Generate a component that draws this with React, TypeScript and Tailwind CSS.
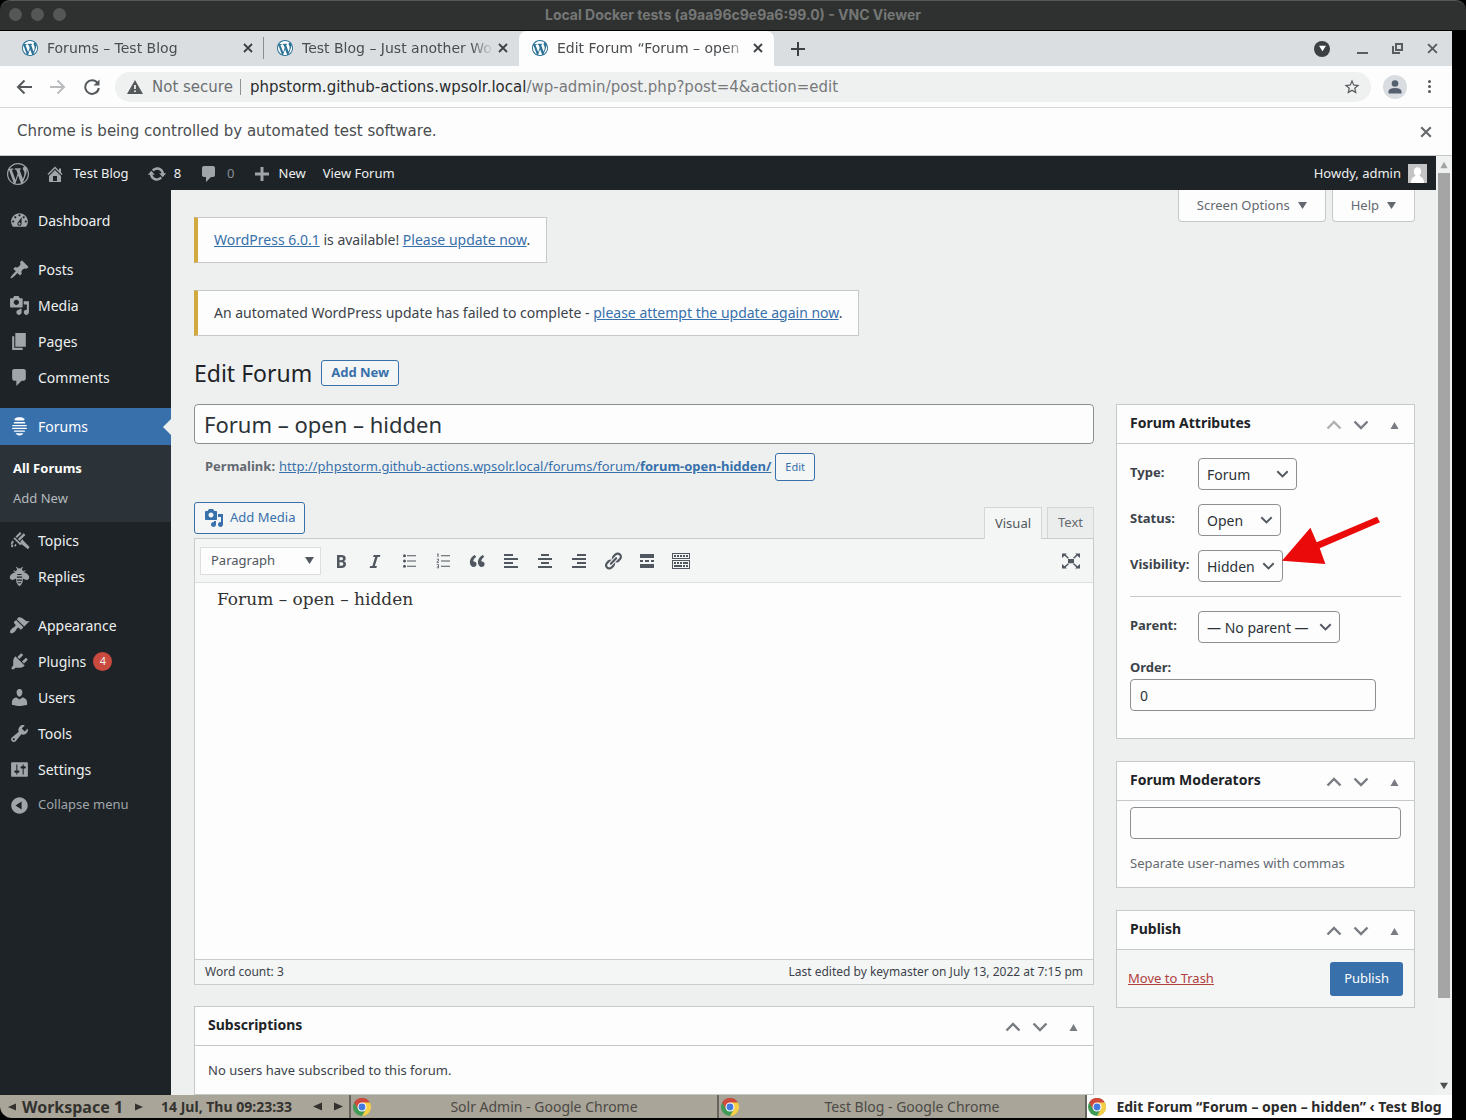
import React from 'react';

const paths = {
  wordpress:
    'M20 10c0-5.51-4.49-10-10-10C4.48 0 0 4.49 0 10c0 5.52 4.48 10 10 10 5.51 0 10-4.48 10-10zM7.78 15.37L4.37 6.22c.55-.02 1.17-.08 1.17-.08.5-.06.44-1.13-.06-1.11 0 0-1.45.11-2.37.11-.18 0-.37 0-.58-.01C4.12 2.69 6.87 1.11 10 1.11c2.33 0 4.45.87 6.05 2.34-.68-.11-1.65.39-1.65 1.58 0 .74.45 1.36.9 2.1.35.61.55 1.36.55 2.46 0 1.49-1.4 5-1.4 5l-3.03-8.37c.54-.02.82-.17.82-.17.5-.05.44-1.25-.06-1.22 0 0-1.44.12-2.38.12-.87 0-2.33-.12-2.33-.12-.5-.03-.56 1.2-.06 1.22l.92.08 1.26 3.41zM17.41 10c.24-.64.74-1.87.43-4.25.7 1.29 1.05 2.71 1.05 4.25 0 3.29-1.73 6.24-4.4 7.78.97-2.59 1.94-5.2 2.92-7.78zM6.1 18.09C3.12 16.65 1.11 13.53 1.11 10c0-1.3.23-2.48.72-3.59C3.25 10.3 4.67 14.2 6.1 18.09zm4.03-6.63l2.58 6.98c-.86.29-1.76.45-2.71.45-.79 0-1.57-.11-2.29-.33.81-2.38 1.62-4.74 2.42-7.1z',
  dashboard:
    'M3.76 16h12.48c1.1-1.37 1.76-3.11 1.76-5 0-4.42-3.58-8-8-8s-8 3.58-8 8c0 1.89.66 3.63 1.76 5zM10 4c.55 0 1 .45 1 1s-.45 1-1 1-1-.45-1-1 .45-1 1-1zM6 6c.55 0 1 .45 1 1s-.45 1-1 1-1-.45-1-1 .45-1 1-1zm8 0c.55 0 1 .45 1 1s-.45 1-1 1-1-.45-1-1 .45-1 1-1zm-5.37 5.55L12 7v6c0 1.1-.9 2-2 2s-2-.9-2-2c0-.57.24-1.08.63-1.45zM4 10c.55 0 1 .45 1 1s-.45 1-1 1-1-.45-1-1 .45-1 1-1zm12 0c.55 0 1 .45 1 1s-.45 1-1 1-1-.45-1-1 .45-1 1-1zm-5 3c0-.55-.45-1-1-1s-1 .45-1 1 .45 1 1 1 1-.45 1-1z',
  post: 'M10.44 3.02l1.82-1.82 6.36 6.35-1.83 1.82c-1.05-.68-2.48-.57-3.41.36l-.75.75c-.92.93-1.04 2.35-.35 3.41l-1.83 1.82-2.41-2.41-2.8 2.79c-.42.42-3.38 2.71-3.8 2.29s1.86-3.39 2.28-3.81l2.79-2.79L4.1 9.36l1.83-1.82c1.05.69 2.48.57 3.4-.36l.75-.75c.93-.92 1.05-2.35.36-3.41z',
  media:
    'M13 11V4c0-.55-.45-1-1-1h-1.67L9 1H5L3.67 3H2c-.55 0-1 .45-1 1v7c0 .55.45 1 1 1h10c.55 0 1-.45 1-1zM7 4.5c1.38 0 2.5 1.12 2.5 2.5S8.38 9.5 7 9.5 4.5 8.38 4.5 7 5.62 4.5 7 4.5zM14 6h5v10.5c0 1.38-1.12 2.5-2.5 2.5S14 17.88 14 16.5s1.12-2.5 2.5-2.5c.17 0 .34.02.5.05V9h-3V6zm-4 8.05V13h2v3.5c0 1.38-1.12 2.5-2.5 2.5S7 17.88 7 16.5 8.12 14 9.5 14c.17 0 .34.02.5.05z',
  page: 'M6 15V2h10v13H6zm-1 1h8v2H3V5h2v11z',
  comment: 'M5 2h9c1.1 0 2 .9 2 2v7c0 1.1-.9 2-2 2h-2l-5 5v-5H5c-1.1 0-2-.9-2-2V4c0-1.1.9-2 2-2z',
  hive: 'M8.500 1.200h3q1.500 0 2 1h.3q1 0 1 1t-1 1H6.200q-1 0-1-1t1-1h.3q.5-1 2-1zM5.500 5.600h9q1 0 1 .8t-1 .8h-9q-1 0-1-.8t1-.8zM3.800 8.600h12.400q.8 0 .8.600t-.8.600H3.800q-.8 0-.8-.6t.8-.6zM3.800 11.200h12.400q.8 0 .8.600t-.8.600H3.800q-.8 0-.8-.6t.8-.6zM5.500 13.800h9q1 0 1 .6t-1 .6h-9q-1 0-1-.6t1-.6zM7.200 16.400h5.600q.8 0 .8.600t-1.200.6q-.6 1-2.400 1t-2.400-1q-1.200 0-1.200-.6t.8-.6z',
  topics:
    'M6.200 6.300L10.500 2l1.400 1.400-4.300 4.300zM8.500 8.600L14 3.100l1.600 1.600-5.500 5.500zM4.200 8.100l1.200-1.200 6.500 6.500-1.200 1.200zM10.800 10.900l2-2 1.200 1.500 5.600 5.900-1.500 2-7-5.400zM3 9.800l1.700 1.700-2.200 2.700-.900-.800zM2 15.200c0-.800 1-2 1-2s1 1.200 1 2-.400 1.300-1 1.300-1-.500-1-1.300zM6 13l1.300 1.300L5.900 16l-1-.800z',
  bee: 'M7.500.800l1.200 1.600q1.300-.600 2.600 0L12.500.800l.800.600-1.100 1.600q.900.800 1 2l2.300-.900.300.800-2.200 1.100c2.500.200 5 2 5.600 4.200.500 2-1.200 3.200-3.200 3-1.100-.100-2-.600-2.700-1.200.200 3.200-.900 5.600-3.300 7.200-2.400-1.600-3.500-4-3.300-7.200-.700.600-1.600 1.100-2.700 1.200-2 .200-3.700-1-3.200-3C1.400 8 3.900 6.200 6.400 6L4.200 4.900l.300-.800 2.300.900q.100-1.200 1-2L6.700 1.400zM8 7.500v1.100h4V7.500zM7.500 10v1.200h5V10zM7.500 12.800V14h5v-1.200zM8.200 15.500l.400 1h2.800l.400-1z',
  appearance:
    'M14.48 11.06L7.41 3.99l1.5-1.5c.5-.56 2.3-.47 3.51.32 1.21.8 1.43 1.28 2.91 2.1 1.18.64 2.45 1.26 4.45.85zm-.71.71L6.7 4.7 4.93 6.47c-.39.39-.39 1.02 0 1.41l1.06 1.06c.39.39.39 1.03 0 1.42-.6.6-1.43 1.11-2.21 1.69-.35.26-.7.53-1.01.84C1.43 14.23.4 16.08 1.4 17.07c.99 1 2.84-.03 4.18-1.36.31-.31.58-.66.85-1.02.57-.78 1.08-1.61 1.69-2.21.39-.39 1.02-.39 1.41 0l1.06 1.06c.39.39 1.02.39 1.41 0z',
  plugins:
    'M13.11 4.36L9.87 7.6 8 5.73l3.24-3.24c.35-.34 1.05-.2 1.56.32.52.51.66 1.21.31 1.55zm-8 1.77l.91-1.12 9.01 9.01-1.19.84c-.71.71-2.63 1.16-3.82 1.16H6.14L4.9 17.26c-.59.59-1.54.59-2.12 0-.59-.58-.59-1.53 0-2.12l1.24-1.24v-3.88c0-1.13.4-3.19 1.09-3.89zm7.26 3.97l3.24-3.24c.34-.35 1.04-.21 1.55.31.52.51.66 1.21.31 1.55l-3.24 3.25z',
  users:
    'M10 9.25c-2.27 0-2.73-3.44-2.73-3.44C7 4.02 7.82 2 9.97 2c2.16 0 2.98 2.02 2.71 3.81 0 0-.41 3.44-2.68 3.44zm0 2.57L12.72 10c2.39 0 4.52 2.33 4.52 4.53v2.49s-3.65 1.13-7.24 1.13c-3.65 0-7.24-1.13-7.24-1.13v-2.49c0-2.25 1.94-4.48 4.47-4.48z',
  tools:
    'M16.68 9.77c-1.34 1.34-3.3 1.67-4.95.99l-5.41 6.52c-.99.99-2.59.99-3.58 0s-.99-2.59 0-3.57l6.52-5.42c-.68-1.65-.35-3.61.99-4.95 1.28-1.28 3.12-1.62 4.72-1.06l-2.89 2.89 2.82 2.82 2.86-2.87c.53 1.58.18 3.39-1.08 4.65zM3.81 16.21c.4.39 1.04.39 1.43 0 .4-.4.4-1.04 0-1.43-.39-.4-1.03-.4-1.43 0-.39.39-.39 1.03 0 1.43z',
  settings:
    'M18 16V4c0-.55-.45-1-1-1H3c-.55 0-1 .45-1 1v12c0 .55.45 1 1 1h14c.55 0 1-.45 1-1zM8 11h1c.55 0 1 .45 1 1s-.45 1-1 1H8v1.500c0 .28-.22.5-.5.5s-.5-.22-.5-.5V13H6c-.55 0-1-.45-1-1s.45-1 1-1h1V5.500c0-.28.22-.5.5-.5s.5.22.5.5V11zm5-2h-1c-.55 0-1-.45-1-1s.45-1 1-1h1V5.500c0-.28.22-.5.5-.5s.5.22.5.5V7h1c.55 0 1 .45 1 1s-.45 1-1 1h-1v5.500c0 .28-.22.5-.5.5s-.5-.22-.5-.5V9z',
  collapse:
    'M10 2.16c4.33 0 7.84 3.51 7.84 7.84s-3.51 7.84-7.84 7.84S2.16 14.33 2.16 10 5.71 2.16 10 2.16zm2 11.72V6.12L6.18 9.97z',
  home: 'M16 8.5l1.53 1.53-1.06 1.06L10 4.6l-6.47 6.49-1.06-1.06L10 2.5l4 4v-2h2v4zm-6-2.46l6 5.99V18H4v-5.97zM12 17v-5H8v5h4z',
  update:
    'M10.2 3.28c3.53 0 6.43 2.61 6.92 6h2.08l-3.5 4-3.5-4h2.32c-.45-1.97-2.21-3.45-4.32-3.45-1.45 0-2.73.71-3.54 1.78L4.95 5.66C6.23 4.2 8.11 3.28 10.2 3.28zm-.4 13.44c-3.52 0-6.43-2.61-6.92-6H.8l3.5-4c1.17 1.33 2.33 2.67 3.5 4H5.48c.45 1.97 2.21 3.45 4.32 3.45 1.45 0 2.73-.71 3.54-1.78l1.71 1.95c-1.28 1.46-3.15 2.38-5.25 2.38z',
  plus: 'M17 8.500v3h-5.500V17h-3v-5.500H3v-3h5.500V3h3v5.500z',
  bold: 'M6 4v13h4.540c1.370 0 2.460-.33 3.260-1 .8-.66 1.200-1.580 1.200-2.770 0-.84-.17-1.510-.51-2.010s-.9-.85-1.670-1.030v-.09c.57-.1 1.020-.4 1.360-.9s.51-1.130.51-1.910c0-1.140-.39-1.980-1.170-2.500C12.750 4.260 11.500 4 9.780 4H6zm2.570 5.150V6.260h1.360c.73 0 1.270.11 1.610.32.34.22.51.58.51 1.070 0 .54-.16.92-.47 1.150s-.82.35-1.510.35h-1.500zm0 2.190h1.600c1.440 0 2.160.53 2.160 1.610 0 .6-.17 1.050-.51 1.340s-.86.43-1.570.43H8.570v-3.380z',
  italic: 'M14.78 6h-2.130l-2.800 9h2.120l-.62 2H4.600l.62-2h2.140l2.800-9H8.030l.62-2h6.750z',
  quote:
    'M9.49 13.22c0-.74-.2-1.38-.61-1.9-.62-.78-1.83-.88-2.53-.72-.29-1.65 1.11-3.75 2.92-4.65L7.88 4c-2.73 1.3-5.42 4.28-4.96 8.05C3.21 14.43 4.59 16 6.54 16c.85 0 1.56-.25 2.12-.75s.83-1.18.83-2.03zm8.05 0c0-.74-.2-1.38-.61-1.9-.63-.78-1.83-.88-2.53-.72-.29-1.65 1.11-3.75 2.92-4.65L15.93 4c-2.73 1.3-5.41 4.28-4.95 8.05.29 2.38 1.66 3.95 3.61 3.95.85 0 1.56-.25 2.12-.75s.83-1.18.83-2.03z',
  bullets:
    'M5.500 3.200a1.500 1.500 0 110 3 1.500 1.500 0 010-3zM8 4.200h9v1H8zM5.500 8.500a1.500 1.500 0 110 3 1.500 1.500 0 010-3zM8 9.500h9v1H8zM5.500 13.800a1.500 1.500 0 110 3 1.500 1.500 0 010-3zM8 14.800h9v1H8z',
  numbers:
    'M4.500 2.500h1V6h-1V3.500H4v-.600zM8 4.200h9v1H8zM3.700 7.800h2.100v1.900L4.700 11h1.200v.700H3.600V11l1.400-1.600v-.900H3.700zM8 9.500h9v1H8zM3.700 13.300h2.200v3.900H3.700v-.700h1.400v-.900H4V15h1.100v-1H3.700zM8 14.800h9v1H8z',
  left: 'M12 5V3H3v2h9zm5 4V7H3v2h14zm-5 4v-2H3v2h9zm5 4v-2H3v2h14z',
  center: 'M14 5V3H6v2h8zm3 4V7H3v2h14zm-3 4v-2H6v2h8zm3 4v-2H3v2h14z',
  right: 'M17 5V3H8v2h9zm0 4V7H3v2h14zm0 4v-2H8v2h9zm0 4v-2H3v2h14z',
  link: 'M17.74 2.76c1.68 1.69 1.68 4.41 0 6.1l-1.53 1.52c-1.12 1.12-2.7 1.47-4.14 1.09l2.62-2.61.76-.77.76-.76c.84-.84.84-2.2 0-3.04-.84-.85-2.2-.85-3.04 0l-.77.76-3.38 3.38c-.37-1.44-.02-3.02 1.1-4.14l1.52-1.53c1.69-1.68 4.42-1.68 6.1 0zM8.59 13.43l5.34-5.34c.42-.42.42-1.1 0-1.52-.44-.43-1.13-.39-1.53 0l-5.33 5.34c-.42.42-.42 1.1 0 1.52.44.43 1.13.39 1.52 0zm-.76 2.29l4.14-4.15c.38 1.44.03 3.02-1.09 4.14l-1.52 1.53c-1.69 1.68-4.41 1.68-6.1 0-1.68-1.68-1.68-4.42 0-6.1l1.53-1.52c1.12-1.12 2.7-1.47 4.14-1.1l-4.14 4.15c-.85.84-.85 2.2 0 3.05.84.84 2.2.84 3.04 0z',
  more: 'M17 7V3H3v4h14zM6 11V9H3v2h3zm6 0V9H8v2h4zm5 0V9h-3v2h3zm0 6v-4H3v4h14z',
  sink: 'M19 2v6H1V2h18zm-1 5V3H2v4h16zM5 4v2H3V4h2zm3 0v2H6V4h2zm3 0v2H9V4h2zm3 0v2h-2V4h2zm3 0v2h-2V4h2zm2 5v9H1V9h18zm-1 8v-7H2v7h16zM5 11v2H3v-2h2zm3 0v2H6v-2h2zm3 0v2H9v-2h2zm6 0v2h-5v-2h5zm-6 3v2H3v-2h8zm3 0v2h-2v-2h2zm3 0v2h-2v-2h2z',
  expand:
    'M7 8h6v4.200H7zM1 2.500h4.800L4.700 3.800l3.200 3-1 1-3.300-3L1 7zM19 2.500h-4.800l1.100 1.300-3.200 3 1 1 3.300-3L19 7zM1 17.500h4.800l-1.100-1.300 3.200-3-1-1-3.300 3L1 13zM19 17.500h-4.800l1.100-1.300-3.200-3 1-1 3.300 3L19 13z',
};

type IconName = keyof typeof paths;

const Icon = ({ name, className = 'size-5' }: { name: IconName; className?: string }) => (
  <svg viewBox="0 0 20 20" fill="currentColor" fillRule="evenodd" className={`shrink-0 ${className}`} aria-hidden="true">
    <path d={paths[name]} />
  </svg>
);

const Cross = ({ className }: { className: string }) => (
  <svg viewBox="0 0 10 10" className={className} fill="none" stroke="currentColor" strokeWidth="1.800" aria-hidden="true">
    <path d="M1 1l8 8M9 1l-8 8" />
  </svg>
);

const Triangle = ({ dir, className = 'size-[9px]' }: { dir: 'up' | 'down' | 'left' | 'right'; className?: string }) => {
  const shapes = { up: 'M5 1l4.500 8h-9z', down: 'M0 1h10L5 9z', left: 'M0 5l10-4.500v9z', right: 'M10 5L0 .500v9z' };
  return (
    <svg viewBox="0 0 10 10" className={`shrink-0 ${className}`} fill="currentColor" aria-hidden="true">
      <path d={shapes[dir]} />
    </svg>
  );
};

const Chevron = ({ up, className }: { up?: boolean; className: string }) => (
  <svg viewBox="0 0 16 10" className={className} fill="none" stroke="currentColor" strokeWidth="2.400" aria-hidden="true">
    <path d={up ? 'M1.500 8.500L8 2l6.500 6.500' : 'M1.500 1.500L8 8l6.500-6.500'} />
  </svg>
);

const Favicon = () => (
  <svg viewBox="0 0 20 20" className="size-4 shrink-0" aria-hidden="true">
    <circle cx="10" cy="10" r="10" fill="#a9cfe2" />
    <circle cx="10" cy="10" r="9" fill="#fff" />
    <path d={paths.wordpress} fill="#2c7196" fillRule="evenodd" />
  </svg>
);

const ChromeLogo = () => (
  <svg viewBox="0 0 20 20" className="size-[18px] shrink-0" aria-hidden="true">
    <circle cx="10" cy="10" r="10" fill="#3f9a55" />
    <path d="M10 10L1.300 5A10 10 0 0118.700 5z" fill="#cf4a3c" />
    <path d="M10 5h8.700A10 10 0 0110 20l4.300-7.500z" fill="#f5ce4a" />
    <path d="M1.300 5L5.700 12.500 10 5z" fill="#cf4a3c" />
    <circle cx="10" cy="10" r="5" fill="#fff" />
    <circle cx="10" cy="10" r="3.800" fill="#4479e0" />
  </svg>
);

const browserTabs = [
  { title: 'Forums – Test Blog', active: false },
  { title: 'Test Blog – Just another Wo', active: false },
  { title: 'Edit Forum “Forum – open', active: true },
];

const BrowserChrome = () => (
  <header className="shrink-0 bg-[#fdfdfd] font-['DejaVu_Sans',sans-serif]">
    <div className="flex h-[35px] items-center bg-[#dbdee1] pl-[9px]">
      {browserTabs.map((tab, i) => (
        <div
          key={tab.title}
          className={`flex h-full w-[255px] items-center pb-px pl-[13px] pr-[11px] ${tab.active ? 'rounded-t-lg bg-[#fdfdfd]' : ''}`}
        >
          <Favicon />
          <span className="ml-[9px] flex-1 overflow-hidden whitespace-nowrap text-[14px] text-[#4a4d50] [mask-image:linear-gradient(to_right,#000_88%,transparent)]">
            {tab.title}
          </span>
          <button aria-label="Close tab" className="ml-1 text-[#3c4043]">
            <Cross className="size-[10px]" />
          </button>
          {i === 0 && <span className="-mr-[11px] ml-[10px] h-[22px] w-px bg-[#8a8d90]" />}
        </div>
      ))}
      <button aria-label="New tab" className="ml-[17px] text-[#3c4043]">
        <svg viewBox="0 0 14 14" className="size-[14px]" stroke="currentColor" strokeWidth="2" aria-hidden="true">
          <path d="M7 0v14M0 7h14" />
        </svg>
      </button>
      <div className="ml-auto flex items-center pr-[14px] text-[#5a5d60]">
        <button aria-label="Search tabs" className="flex size-4 items-center justify-center rounded-full bg-[#3c4043] text-white">
          <Triangle dir="down" className="size-[7px]" />
        </button>
        <button aria-label="Minimize" className="ml-[27px] mt-2 h-[2px] w-[11px] bg-[#5a5d60]" />
        <button aria-label="Restore" className="ml-6">
          <svg viewBox="0 0 11 11" className="size-[11px]" fill="none" stroke="currentColor" strokeWidth="2" aria-hidden="true">
            <path d="M4 1h6v6H4zM1 3v7h7" />
          </svg>
        </button>
        <button aria-label="Close window" className="ml-6">
          <Cross className="size-[11px]" />
        </button>
      </div>
    </div>

    <div className="flex h-[42px] items-center border-b border-[#d4d7d8] px-4 text-[#55595c]">
      <button aria-label="Back">
        <svg viewBox="0 0 16 16" className="size-4" fill="none" stroke="currentColor" strokeWidth="2" aria-hidden="true">
          <path d="M16 8H2M8.500 1.500L2 8l6.500 6.500" />
        </svg>
      </button>
      <button aria-label="Forward" className="ml-[18px] text-[#b9bcbd]">
        <svg viewBox="0 0 16 16" className="size-4" fill="none" stroke="currentColor" strokeWidth="2" aria-hidden="true">
          <path d="M0 8h14M7.500 1.500L14 8l-6.500 6.500" />
        </svg>
      </button>
      <button aria-label="Reload" className="ml-[18px]">
        <svg viewBox="0 0 16 16" className="size-4" fill="none" stroke="currentColor" strokeWidth="2" aria-hidden="true">
          <path d="M13.500 4A6.800 6.800 0 1014.800 9" />
          <path d="M15.500.500v6h-6z" fill="currentColor" stroke="none" />
        </svg>
      </button>
      <div className="ml-[15px] flex h-[30px] flex-1 items-center rounded-full bg-[#eff1f1] pl-3 pr-[10px] pt-px text-[15px]">
        <svg viewBox="0 0 16 14" className="h-[14px] w-4" fill="currentColor" aria-hidden="true">
          <path d="M8 0l8 14H0z" />
          <path d="M7.200 5h1.600v4H7.200zM7.200 10.500h1.600V12H7.200z" fill="#fff" />
        </svg>
        <span className="ml-[9px] text-[#6c6f71]">Not secure</span>
        <span className="ml-[7px] mr-[9px] h-4 w-px bg-[#8f9294]" />
        <span className="text-[#77797b]">
          <span className="text-[#2a2c2e]">phpstorm.github-actions.wpsolr.local</span>/wp-admin/post.php?post=4&amp;action=edit
        </span>
        <svg viewBox="0 0 24 24" className="ml-auto size-[18px]" fill="currentColor" aria-hidden="true">
          <path d="M22 9.240l-7.190-.620L12 2 9.190 8.630 2 9.240l5.460 4.730L5.820 21 12 17.270 18.180 21l-1.630-7.030L22 9.240zM12 15.400l-3.760 2.270 1-4.280-3.320-2.880 4.380-.380L12 6.100l1.710 4.040 4.380.380-3.320 2.880 1 4.280L12 15.400z" />
        </svg>
      </div>
      <button aria-label="Profile" className="ml-3 flex size-6 items-center justify-center rounded-full bg-[#d9dce0]">
        <svg viewBox="0 0 14 14" className="size-[14px]" fill="#55606f" aria-hidden="true">
          <circle cx="7" cy="3.500" r="3.300" />
          <path d="M.500 13.500v-2Q.500 8 7 8t6.500 3.500v2z" />
        </svg>
      </button>
      <button aria-label="Menu" className="ml-[21px] mr-[5px] flex flex-col gap-[2px]">
        <i className="size-[3px] rounded-full bg-[#55595c]" />
        <i className="size-[3px] rounded-full bg-[#55595c]" />
        <i className="size-[3px] rounded-full bg-[#55595c]" />
      </button>
    </div>

    <div className="flex h-12 items-center justify-between border-b border-[#c3c6c6] pl-[17px] pr-5 text-[15px] text-[#4a4d50]">
      <p>Chrome is being controlled by automated test software.</p>
      <button aria-label="Dismiss" className="text-[#66696b]">
        <Cross className="size-[12px]" />
      </button>
    </div>
  </header>
);

const AdminBar = () => (
  <nav className="flex h-[34px] shrink-0 items-center bg-[#1d2327] pl-[7px] pr-[9px] pt-px text-[13px] text-[#eef0f0]">
    <a href="#wp" aria-label="WordPress" className="text-[#a0a5aa]">
      <Icon name="wordpress" className="size-[22px]" />
    </a>
    <a href="#site" className="ml-4 flex items-center gap-2">
      <Icon name="home" className="size-5 text-[#a0a5aa]" />
      Test Blog
    </a>
    <a href="#updates" className="ml-[18px] flex items-center gap-[7px]">
      <Icon name="update" className="size-5 text-[#a0a5aa]" />8
    </a>
    <a href="#comments" className="ml-[18px] flex items-center gap-2 text-[#8a8f93]">
      <Icon name="comment" className="size-5 text-[#a0a5aa]" />0
    </a>
    <a href="#new" className="ml-[17px] flex items-center gap-[7px]">
      <Icon name="plus" className="size-5 text-[#a0a5aa]" />
      New
    </a>
    <a href="#view" className="ml-[17px]">
      View Forum
    </a>
    <a href="#profile" className="ml-auto flex items-center gap-[7px]">
      Howdy, admin
      <svg viewBox="0 0 20 20" className="size-[19px]" aria-hidden="true">
        <path fill="#c4c4c4" d="M0 0h20v20H0z" />
        <path fill="#fff" d="M10 3.500c5 0 4.500 7 2 8.500 1 1.500 4.500 1.500 5 8H3c.5-6.500 4-6.500 5-8-2.500-1.500-3-8.500 2-8.500z" />
      </svg>
    </a>
  </nav>
);

const MenuItem = ({ icon, label, badge }: { icon: IconName; label: string; badge?: number }) => (
  <a href="#menu" className="flex h-9 items-center pl-[9px] text-[#eef0f0]">
    <Icon name={icon} className="size-[21px] text-[#a0a5aa]" />
    <span className="ml-2">{label}</span>
    {badge && (
      <span className="ml-[7px] flex size-[19px] items-center justify-center rounded-full bg-[#ca4a40] text-[11px]">{badge}</span>
    )}
  </a>
);

const Sidebar = () => (
  <aside className="flex w-[171px] shrink-0 flex-col gap-[13px] bg-[#1d2327] pt-3 text-[14px]">
    <MenuItem icon="dashboard" label="Dashboard" />
    <div>
      <MenuItem icon="post" label="Posts" />
      <MenuItem icon="media" label="Media" />
      <MenuItem icon="page" label="Pages" />
      <MenuItem icon="comment" label="Comments" />
    </div>
    <div>
      <a href="#forums" className="flex h-[37px] items-center bg-[#3870ab] pl-[9px] text-white">
        <Icon name="hive" className="size-[21px]" />
        <span className="ml-2">Forums</span>
        <svg viewBox="0 0 8 16" className="ml-auto h-4 w-2" fill="#eef0f0" aria-hidden="true">
          <path d="M8 0v16L0 8z" />
        </svg>
      </a>
      <div className="flex h-[77px] flex-col justify-center gap-[10px] bg-[#2c3338] pb-[2px] pl-[13px] text-[13px] leading-5">
        <a href="#all" className="font-bold text-white">
          All Forums
        </a>
        <a href="#add" className="text-[#b4b9bd]">
          Add New
        </a>
      </div>
      <MenuItem icon="topics" label="Topics" />
      <MenuItem icon="bee" label="Replies" />
    </div>
    <div>
      <MenuItem icon="appearance" label="Appearance" />
      <MenuItem icon="plugins" label="Plugins" badge={4} />
      <MenuItem icon="users" label="Users" />
      <MenuItem icon="tools" label="Tools" />
      <MenuItem icon="settings" label="Settings" />
      <button className="flex h-9 items-center pl-[9px] text-[13px] text-[#a0a5aa]">
        <Icon name="collapse" className="size-[21px]" />
        <span className="ml-2">Collapse menu</span>
      </button>
    </div>
  </aside>
);

const Notice = ({ children }: { children: React.ReactNode }) => (
  <div className="flex h-[46px] w-fit items-center border border-l-4 border-[#c6c9ca] border-l-[#d2a93f] bg-[#fdfdfd] px-4 pb-[2px] text-[14px]">
    <p>{children}</p>
  </div>
);

const Link = ({ children, className = '' }: { children: React.ReactNode; className?: string }) => (
  <a href="#link" className={`text-[#3870ab] underline ${className}`}>
    {children}
  </a>
);

const PanelHeader = ({ title, first }: { title: string; first?: boolean }) => (
  <div className="flex h-[39px] items-center border-b border-[#c6c9ca] pl-[13px] pr-[15px]">
    <h2 className="pb-1 text-[14px] font-bold text-[#1d2327]">{title}</h2>
    <div className="ml-auto mt-[2px] flex items-center text-[#787c82]">
      <button aria-label="Move up" className={first ? 'text-[#b0b3b6]' : ''}>
        <Chevron up className="h-[10px] w-4" />
      </button>
      <button aria-label="Move down" className="ml-[11px]">
        <Chevron className="h-[10px] w-4" />
      </button>
      <button aria-label={`Toggle ${title}`} className="ml-[21px]">
        <Triangle dir="up" />
      </button>
    </div>
  </div>
);

const Panel = ({ title, first, children }: { title: string; first?: boolean; children: React.ReactNode }) => (
  <section className="border border-[#c6c9ca] bg-[#fdfdfd]">
    <PanelHeader title={title} first={first} />
    {children}
  </section>
);

const SelectRow = ({
  id,
  label,
  value,
  width,
  children,
}: {
  id: string;
  label: string;
  value: string;
  width: string;
  children?: React.ReactNode;
}) => (
  <div className="flex items-center">
    <label htmlFor={id} className="w-[68px] shrink-0 whitespace-nowrap pb-[2px] text-[13px] font-bold text-[#3c434a]">
      {label}
    </label>
    <div className={`relative ${width}`}>
      <select id={id} className="h-8 w-full appearance-none rounded border border-[#8c8f94] bg-[#fdfdfd] pl-2 text-[14px] text-[#2c3338]">
        <option>{value}</option>
      </select>
      <Chevron className="pointer-events-none absolute right-2 top-3 h-2 w-[13px] text-[#50575e]" />
      {children}
    </div>
  </div>
);

const toolbar: { name: IconName; label: string }[] = [
  { name: 'bold', label: 'Bold' },
  { name: 'italic', label: 'Italic' },
  { name: 'bullets', label: 'Bulleted list' },
  { name: 'numbers', label: 'Numbered list' },
  { name: 'quote', label: 'Blockquote' },
  { name: 'left', label: 'Align left' },
  { name: 'center', label: 'Align center' },
  { name: 'right', label: 'Align right' },
  { name: 'link', label: 'Insert link' },
  { name: 'more', label: 'Read more' },
  { name: 'sink', label: 'Toolbar toggle' },
];

const Editor = () => (
  <div>
    <div className="flex items-end">
      <button className="mb-1 flex h-8 items-center gap-[6px] rounded-[3px] border border-[#3870ab] bg-[#f4f6f6] px-[9px] text-[13px] text-[#3870ab]">
        <Icon name="media" />
        Add Media
      </button>
      <div className="ml-auto flex gap-[5px] text-[13px] text-[#50575e]">
        <button className="relative -mb-px h-8 border border-b-0 border-[#d3d5d6] bg-[#f4f6f6] px-[10px]">Visual</button>
        <button className="h-[31px] border border-b-0 border-[#d3d5d6] bg-[#ebeded] px-[10px] text-[#646970]">Text</button>
      </div>
    </div>
    <div className="border border-[#c9cccd] bg-[#fdfdfd]">
      <div className="flex h-11 items-center border-b border-[#dcdedf] bg-[#f4f6f6] pl-[5px] pr-3 text-[#50575e]">
        <button className="flex h-7 w-[121px] items-center justify-between border border-[#dcdedf] bg-[#fdfdfd] pl-[10px] pr-[6px] text-[13px]">
          Paragraph
          <Triangle dir="down" />
        </button>
        <div className="ml-[10px] flex gap-[14px]">
          {toolbar.map((item) => (
            <button key={item.name} aria-label={item.label}>
              <Icon name={item.name} />
            </button>
          ))}
        </div>
        <button aria-label="Fullscreen" className="ml-auto">
          <Icon name="expand" />
        </button>
      </div>
      <div className="h-[376px] px-[22px] pt-1 font-['DejaVu_Serif',serif] text-[17px] text-[#333]">Forum – open – hidden</div>
      <div className="flex h-[25px] items-center justify-between border-t border-[#c9cccd] bg-[#f4f6f6] px-[10px] text-[12px]">
        <span>Word count: 3</span>
        <span>Last edited by keymaster on July 13, 2022 at 7:15 pm</span>
      </div>
    </div>
  </div>
);

const SideColumn = () => (
  <div className="flex w-[299px] shrink-0 flex-col gap-[22px]">
    <Panel title="Forum Attributes" first>
      <div className="h-[294px] px-[13px] pt-[14px]">
        <div className="flex flex-col gap-[14px]">
          <SelectRow id="type" label="Type:" value="Forum" width="w-[99px]" />
          <SelectRow id="status" label="Status:" value="Open" width="w-[83px]" />
          <SelectRow id="visibility" label="Visibility:" value="Hidden" width="w-[85px]">
            {/* Callout arrow pointing at the visibility select */}
            <svg viewBox="0 0 98 48" className="pointer-events-none absolute -top-[34px] left-[84px] h-12 w-[98px]" fill="#eb0a0a" aria-hidden="true">
              <path d="M0 44.700L28.400 11.700 34.700 26.300 95 .700 98 6.300 37.700 32.300 43.400 48z" />
            </svg>
          </SelectRow>
          <hr className="border-[#c6c9ca]" />
          <SelectRow id="parent" label="Parent:" value="— No parent —" width="w-[142px]" />
        </div>
        <label htmlFor="order" className="mt-4 block text-[13px] font-bold leading-4 text-[#3c434a]">
          Order:
        </label>
        <input
          id="order"
          defaultValue="0"
          className="mt-1 block h-8 w-[246px] rounded border border-[#8c8f94] bg-[#fdfdfd] px-[9px] text-[14px] text-[#2c3338]"
        />
      </div>
    </Panel>

    <Panel title="Forum Moderators">
      <div className="h-[86px] px-[13px] pt-[6px]">
        <input aria-label="Forum Moderators" className="block h-8 w-full rounded border border-[#8c8f94] bg-[#fdfdfd] px-2 text-[14px]" />
        <p className="mt-[14px] text-[13px] leading-5 text-[#646970]">Separate user-names with commas</p>
      </div>
    </Panel>

    <Panel title="Publish">
      <div className="flex h-[57px] items-center justify-between bg-[#f4f6f6] px-[11px]">
        <a href="#trash" className="text-[13px] text-[#b0403d] underline">
          Move to Trash
        </a>
        <button className="h-[34px] rounded-[3px] bg-[#3870ab] px-[14px] text-[13px] text-white">Publish</button>
      </div>
    </Panel>
  </div>
);

const EditScreen = () => (
  <main className="min-w-0 flex-1 overflow-hidden bg-[#eef0f0] pl-[23px] pr-[21px] text-[#3c434a]">
    <div className="flex items-start">
      <div className="flex flex-1 flex-col gap-[27px] pt-[27px]">
        <Notice>
          <Link>WordPress 6.0.1</Link> is available! <Link>Please update now</Link>.
        </Notice>
        <Notice>
          An automated WordPress update has failed to complete - <Link>please attempt the update again now</Link>.
        </Notice>
      </div>
      <div className="flex gap-[6px] text-[13px] text-[#646970]">
        <button className="flex h-8 items-center gap-2 rounded-b border border-t-0 border-[#c6c9ca] bg-[#fdfdfd] px-[18px]">
          Screen Options <Triangle dir="down" />
        </button>
        <button className="flex h-8 items-center gap-2 rounded-b border border-t-0 border-[#c6c9ca] bg-[#fdfdfd] px-[18px]">
          Help <Triangle dir="down" />
        </button>
      </div>
    </div>

    <div className="mt-[21px] flex h-8 items-center gap-[9px]">
      <h1 className="text-[23px] text-[#1d2327]">Edit Forum</h1>
      <a href="#new" className="flex h-[26px] items-center rounded-[3px] border border-[#3870ab] bg-[#f4f6f6] px-[9px] text-[13px] font-bold text-[#3870ab]">
        Add New
      </a>
    </div>

    <div className="mt-[15px] flex items-start gap-[22px]">
      <div className="min-w-0 flex-1">
        <input
          aria-label="Title"
          defaultValue="Forum – open – hidden"
          className="block h-10 w-full rounded border border-[#8c8f94] bg-[#fdfdfd] px-[9px] text-[22px] text-[#2c3338]"
        />
        <div className="mb-[21px] mt-[9px] flex h-7 items-center pl-[11px] text-[13px]">
          <strong className="mr-1 text-[#646970]">Permalink:</strong>
          <Link>
            http://phpstorm.github-actions.wpsolr.local/forums/forum/<strong>forum-open-hidden/</strong>
          </Link>
          <button className="ml-1 h-7 rounded-[3px] border border-[#3870ab] bg-[#f4f6f6] px-[9px] text-[11px] text-[#3870ab]">Edit</button>
        </div>
        <Editor />
        <div className="mt-[21px]">
          <Panel title="Subscriptions">
            <p className="px-[13px] py-[14px] text-[13px] leading-5">No users have subscribed to this forum.</p>
          </Panel>
        </div>
      </div>
      <SideColumn />
    </div>
  </main>
);

const Taskbar = () => (
  <footer className="mb-[2px] flex h-[23px] shrink-0 items-center overflow-hidden rounded-bl-xl bg-[#a9a599] text-[14px] text-[#4c4a46]">
    <div className="flex w-[349px] shrink-0 items-center whitespace-nowrap pl-2 font-bold text-[#33322f]">
      <Triangle dir="left" className="size-2" />
      <span className="ml-[6px] text-[16px]">Workspace 1</span>
      <Triangle dir="right" className="ml-3 size-2" />
      <span className="ml-[18px]">14 Jul, Thu 09:23:33</span>
      <Triangle dir="left" className="ml-auto size-[9px]" />
      <Triangle dir="right" className="ml-3 mr-[6px] size-[9px]" />
    </div>
    {['Solr Admin - Google Chrome', 'Test Blog - Google Chrome'].map((title) => (
      <button key={title} className="flex h-full flex-1 basis-0 items-center border-l-2 border-[#66645e] pl-[2px]">
        <ChromeLogo />
        <span className="flex-1">{title}</span>
      </button>
    ))}
    <button className="flex h-full flex-1 basis-0 items-center whitespace-nowrap border-l-2 border-[#66645e] bg-[#fdfdfd] pl-px font-bold text-[#2b2b2b]">
      <ChromeLogo />
      <span className="flex-1">Edit Forum “Forum – open – hidden” ‹ Test Blog</span>
    </button>
  </footer>
);

const App = () => (
  <div className="flex h-screen flex-col overflow-hidden bg-black font-['Noto_Sans','Open_Sans',sans-serif]">
    <div className="relative flex h-[30px] shrink-0 items-center justify-center rounded-t-[10px] border-t border-[#555857] bg-[#2f3130] pb-[2px]">
      <div className="absolute left-[9px] flex gap-[9px]">
        <i className="size-[13px] rounded-full bg-[#555756]" />
        <i className="size-[13px] rounded-full bg-[#555756]" />
        <i className="size-[13px] rounded-full bg-[#555756]" />
      </div>
      <span className="font-['Inter',sans-serif] text-[14px] font-bold text-[#757776]">
        Local Docker tests (a9aa96c9e9a6:99.0) - VNC Viewer
      </span>
    </div>

    <div className="mr-[14px] mt-px flex min-h-0 flex-1 flex-col">
      <BrowserChrome />
      <div className="flex min-h-0 flex-1">
        <div className="flex min-w-0 flex-1 flex-col">
          <AdminBar />
          <div className="flex min-h-0 flex-1">
            <Sidebar />
            <EditScreen />
          </div>
        </div>
        {/* Page scrollbar */}
        <div className="flex w-4 shrink-0 flex-col items-center bg-[#f0f1f1] py-[5px]">
          <Triangle dir="up" className="size-2 text-[#a3a3a3]" />
          <div className="mb-[84px] mt-1 w-3 flex-1 bg-[#a5a5a5]" />
          <Triangle dir="down" className="size-2 text-[#505050]" />
        </div>
      </div>
      <Taskbar />
    </div>
  </div>
);

export default App;
